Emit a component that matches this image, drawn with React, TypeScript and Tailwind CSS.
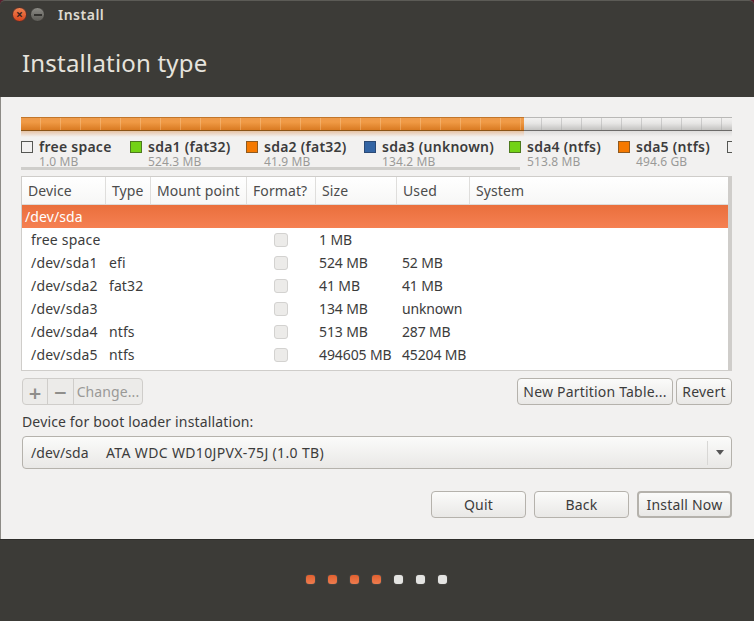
import React from 'react';

const legend = [
  { name: 'free space', size: '1.0 MB', swatch: 'bg-[#f2f1f0] border-[#555753]', width: 'w-[109px]' },
  { name: 'sda1 (fat32)', size: '524.3 MB', swatch: 'bg-[#73d216] border-[#4e7a1f]', width: 'w-[116px]' },
  { name: 'sda2 (fat32)', size: '41.9 MB', swatch: 'bg-[#f57900] border-[#8f5a20]', width: 'w-[118px]' },
  { name: 'sda3 (unknown)', size: '134.2 MB', swatch: 'bg-[#3465a4] border-[#2c4a75]', width: 'w-[145px]' },
  { name: 'sda4 (ntfs)', size: '513.8 MB', swatch: 'bg-[#73d216] border-[#4e7a1f]', width: 'w-[109px]' },
  { name: 'sda5 (ntfs)', size: '494.6 GB', swatch: 'bg-[#f57900] border-[#8f5a20]', width: 'w-[109px]' },
];

const rows = [
  { device: 'free space', type: '', size: '1 MB', used: '' },
  { device: '/dev/sda1', type: 'efi', size: '524 MB', used: '52 MB' },
  { device: '/dev/sda2', type: 'fat32', size: '41 MB', used: '41 MB' },
  { device: '/dev/sda3', type: '', size: '134 MB', used: 'unknown' },
  { device: '/dev/sda4', type: 'ntfs', size: '513 MB', used: '287 MB' },
  { device: '/dev/sda5', type: 'ntfs', size: '494605 MB', used: '45204 MB' },
];

const columns = [
  { label: 'Device', width: 'w-[84px]' },
  { label: 'Type', width: 'w-[45px]' },
  { label: 'Mount point', width: 'w-[96px]' },
  { label: 'Format?', width: 'w-[69px]' },
  { label: 'Size', width: 'w-[81px]' },
  { label: 'Used', width: 'w-[73px]' },
];

const btn =
  'flex items-center justify-center h-[27px] rounded-[4px] border border-[#b5b2ac] bg-gradient-to-b from-[#fbfbfa] to-[#e9e8e6] text-[14px] tracking-[0.2px] text-[#3c3c3c]';

const steps = [true, true, true, true, false, false, false];

const App: React.FC = () => {
  return (
    <div className="w-[754px] h-[621px] flex flex-col overflow-hidden bg-[#5a1f2e] font-['Noto_Sans',sans-serif] tracking-[0.1px]">
      {/* header */}
      <div className="h-[97px] rounded-t-[5px] border-t border-[#5c5b56] bg-[#3c3b37] flex flex-col px-[21px]">
        <div className="flex items-center h-[27px] -ml-[9px]">
          <div className="w-[15px] h-[15px] rounded-full bg-gradient-to-b from-[#f0824f] to-[#d9441c] border border-[#55302a] flex items-center justify-center text-[#3a2320] text-[12px] leading-none font-bold">
            ×
          </div>
          <div className="ml-[3px] w-[15px] h-[15px] rounded-full bg-gradient-to-b from-[#8b8a85] to-[#5d5c57] border border-[#3a3935] flex items-center justify-center">
            <div className="w-[8px] h-[2px] bg-[#33322f]" />
          </div>
          <span className="ml-[13px] text-[14px] tracking-[0.5px] font-semibold text-[#dfdbd2]">Install</span>
        </div>
        <h1 className="mt-[15px] ml-[1px] text-[24px] tracking-[0.2px] leading-[40px] text-[#e6e3dc]">Installation type</h1>
      </div>

      {/* body */}
      <div className="h-[442px] bg-[#f2f1f0] border-l border-[#8d8b86] pl-[20px] pr-[22px] flex flex-col">
        {/* partition bar */}
        <div className="mt-[20px] flex h-[14px]">
          <div className="w-[503px] relative border-t border-[#c2762a] border-b border-b-[#8a5417] bg-[linear-gradient(180deg,#ee9a4a_0%,#f09a45_35%,#d97a22_100%)]">
            <div className="absolute inset-0 bg-[repeating-linear-gradient(90deg,transparent_0,transparent_19px,rgba(255,225,185,0.3)_19px,rgba(255,225,185,0.3)_20px)]" />
          </div>
          <div className="flex-1 relative border-t border-[#b9b8b6] border-b border-b-[#6c6b69] bg-[linear-gradient(180deg,#f3f2f1_0%,#e6e5e4_45%,#c3c2c0_100%)]">
            <div className="absolute inset-0 bg-[repeating-linear-gradient(90deg,transparent_0,transparent_17px,rgba(165,165,165,0.45)_17px,rgba(165,165,165,0.45)_18px,transparent_18px,transparent_20px)]" />
          </div>
        </div>
        <div className="flex h-[6px]">
          <div className="w-[503px] bg-gradient-to-b from-[#e5c3a6] to-[#f2f1f0]" />
          <div className="flex-1 bg-gradient-to-b from-[#dedddc] to-[#f2f1f0]" />
        </div>

        {/* legend, scrolled sideways */}
        <div className="relative h-[35px] pt-[2px] overflow-hidden">
          <div className="flex">
            {legend.map((item) => (
              <div key={item.name} className={`${item.width} shrink-0 flex`}>
                <div className={`mt-[2px] w-[12px] h-[12px] border ${item.swatch}`} />
                <div className="ml-[6px]">
                  <div className="text-[14px] leading-[16px] tracking-[0.25px] font-semibold text-[#3c3c3c] whitespace-nowrap">{item.name}</div>
                  <div className="text-[12px] leading-[14px] text-[#9a9a98] whitespace-nowrap">{item.size}</div>
                </div>
              </div>
            ))}
            <div className="mt-[2px] w-[12px] h-[12px] shrink-0 border border-[#555753]" />
          </div>
          <div className="absolute left-0 bottom-[2px] w-[499px] h-[3px] bg-[#cfcecb]" />
        </div>

        {/* table */}
        <div className="mt-[4px] h-[195px] border border-[#cfcdca] bg-white relative overflow-hidden">
          <div className="flex h-[28px] border-b border-[#dcdbd9] bg-gradient-to-b from-white to-[#f7f7f6] text-[14px] text-[#4c4c4c]">
            {columns.map((col) => (
              <div key={col.label} className={`${col.width} px-[6px] flex items-center border-r border-[#dfdedc] whitespace-nowrap`}>
                {col.label}
              </div>
            ))}
            <div className="px-[6px] flex items-center">System</div>
          </div>
          <div className="h-[23px] pl-[3px] flex items-center bg-gradient-to-b from-[#ea6f3c] to-[#f58052] text-[14px] text-white">
            /dev/sda
          </div>
          {rows.map((r) => (
            <div key={r.device} className="flex h-[23px] items-center text-[14px] text-[#3c3c3c] whitespace-nowrap">
              <div className="w-[84px] pl-[9px] tracking-[0.2px]">{r.device}</div>
              <div className="w-[45px] pl-[3px]">{r.type}</div>
              <div className="w-[96px]" />
              <div className="w-[69px] flex justify-center pr-[2px]">
                <div className="w-[14px] h-[14px] rounded-[3px] border border-[#d3d2d0] bg-[#ecebe9]" />
              </div>
              <div className="w-[81px] pl-[3px] tracking-[-0.1px]">{r.size}</div>
              <div className="w-[73px] pl-[5px] tracking-[-0.15px]">{r.used}</div>
            </div>
          ))}
          <div className="absolute right-0 top-0 bottom-0 w-[3px] bg-[#cfcdca]" />
        </div>

        {/* partition actions */}
        <div className="mt-[7px] flex justify-between">
          <div className="flex h-[27px] ml-[1px] rounded-[4px] border border-[#cfcdca] bg-[#ecebe9] text-[#8f8e8b]">
            <div className="w-[25px] flex items-center justify-center border-r border-[#cfcdca] text-[22px] font-semibold leading-none">+</div>
            <div className="w-[26px] flex items-center justify-center border-r border-[#cfcdca] text-[22px] font-semibold leading-none">−</div>
            <div className="w-[68px] flex items-center justify-center text-[14px] text-[#9a9997]">Change...</div>
          </div>
          <div className="flex gap-[3px]">
            <div className={`${btn} w-[156px]`}>New Partition Table...</div>
            <div className={`${btn} w-[56px]`}>Revert</div>
          </div>
        </div>

        <div className="mt-[6px] h-[20px] ml-[1px] flex items-center text-[14px] tracking-[0.15px] text-[#3c3c3c] whitespace-nowrap">Device for boot loader installation:</div>

        {/* boot loader combo */}
        <div className="mt-[5px] h-[33px] ml-[1px] rounded-[4px] border border-[#b5b2ac] bg-gradient-to-b from-[#fbfbfa] to-[#e9e8e6] flex items-center text-[14px] text-[#3c3c3c]">
          <span className="ml-[8px] w-[75px]">/dev/sda</span>
          <span className="flex-1 tracking-[0.35px]">ATA WDC WD10JPVX-75J (1.0 TB)</span>
          <div className="w-[24px] h-[24px] border-l border-[#d8d7d5] flex items-center justify-center">
            <div className="border-x-[4px] border-x-transparent border-t-[5px] border-t-[#555]" />
          </div>
        </div>

        {/* wizard buttons */}
        <div className="mt-[22px] flex justify-end gap-[8px]">
          <div className={`${btn} w-[95px]`}>Quit</div>
          <div className={`${btn} w-[95px]`}>Back</div>
          <div className={`${btn} w-[95px] border-2 border-[#9b9994]`}>Install Now</div>
        </div>
      </div>

      {/* footer */}
      <div className="flex-1 bg-[#3c3b37] border-t border-[#2e2d2a] flex items-start justify-center pt-[35px] pr-[1px] gap-[13px]">
        {steps.map((done, i) => (
          <div
            key={i}
            className={`w-[9px] h-[9px] rounded-[3px] shadow-[0_0_1px_#9a9a98] ${done ? 'bg-gradient-to-b from-[#e2602f] to-[#ee7c4e]' : 'bg-[#e4e4e2]'}`}
          />
        ))}
      </div>
    </div>
  );
};

export default App;
